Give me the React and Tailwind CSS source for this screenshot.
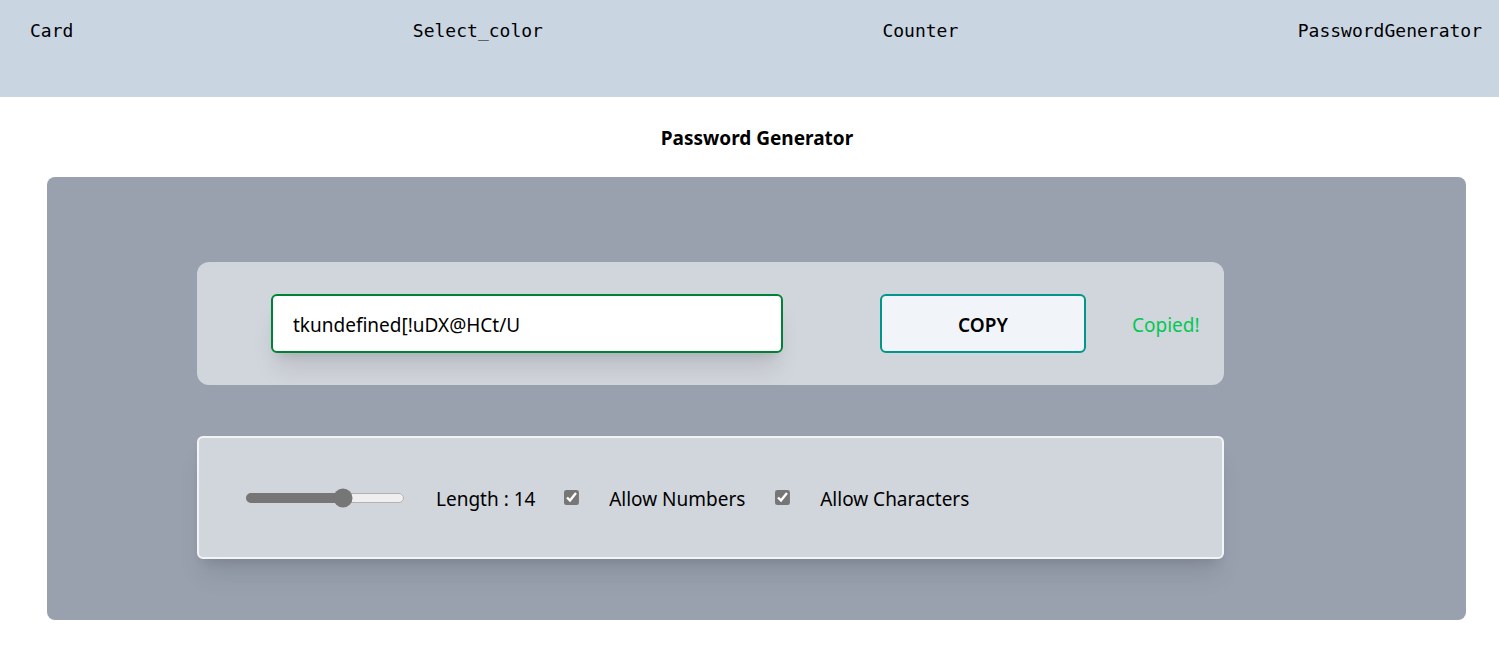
import React, { useState } from 'react';

const navItems = ['Card', 'Select_color', 'Counter', 'PasswordGenerator'];

const App = () => {
  const [length, setLength] = useState(14);
  const [numbers, setNumbers] = useState(true);
  const [chars, setChars] = useState(true);
  const password = 'tkundefined[!uDX@HCt/U';

  return (
    <div className="min-h-[664px] bg-white font-['Noto_Sans',sans-serif] text-black">
      {/* nav */}
      <nav className="h-[97px] bg-slate-300 pl-[30px] pr-[17px] pt-[17px] flex justify-between items-start font-['DejaVu_Sans_Mono',monospace] text-lg">
        {navItems.map((item) => (
          <a key={item} href="#" className="leading-7">{item}</a>
        ))}
      </nav>

      <h1 className="mt-[27px] text-center text-[19px] font-bold leading-7 ml-[15px]">Password Generator</h1>

      <div className="mt-[25px] ml-[47px] w-[1419px] h-[443px] bg-gray-400 rounded-lg pt-[85px] pl-[150px]">
        {/* output row */}
        <div className="w-[1027px] h-[123px] bg-gray-300 rounded-xl flex items-center pl-[74px]">
          <input
            type="text"
            readOnly
            value={password}
            className="w-[512px] h-[59px] bg-white border-2 border-green-700 rounded-md px-5 pt-[3px] text-[19px] outline-none shadow-xl"
          />
          <button className="ml-[97px] w-[206px] h-[59px] bg-slate-100 border-2 border-teal-600 rounded-md pt-[3px] text-[19px] font-semibold">
            COPY
          </button>
          <span className="ml-[46px] mt-[4px] text-[19px] text-green-500">Copied!</span>
        </div>

        {/* options row */}
        <div className="mt-[51px] w-[1027px] h-[123px] bg-gray-300 border-2 border-gray-100 rounded-md shadow-xl flex items-center pl-[46px] text-[19px]">
          <input
            type="range"
            min={4}
            max={20}
            value={length}
            onChange={(e) => setLength(Number(e.target.value))}
            className="w-[128px] accent-[#767676] [zoom:1.25]"
          />
          <label className="ml-[31px] mt-[4px]">Length : {length}</label>
          <input
            type="checkbox"
            checked={numbers}
            onChange={() => setNumbers(!numbers)}
            className="ml-[25px] accent-[#767676] [zoom:1.15]"
          />
          <label className="ml-[30px] mt-[4px]">Allow Numbers</label>
          <input
            type="checkbox"
            checked={chars}
            onChange={() => setChars(!chars)}
            className="ml-[26px] accent-[#767676] [zoom:1.15]"
          />
          <label className="ml-[30px] mt-[4px]">Allow Characters</label>
        </div>
      </div>
    </div>
  );
};

export default App;
